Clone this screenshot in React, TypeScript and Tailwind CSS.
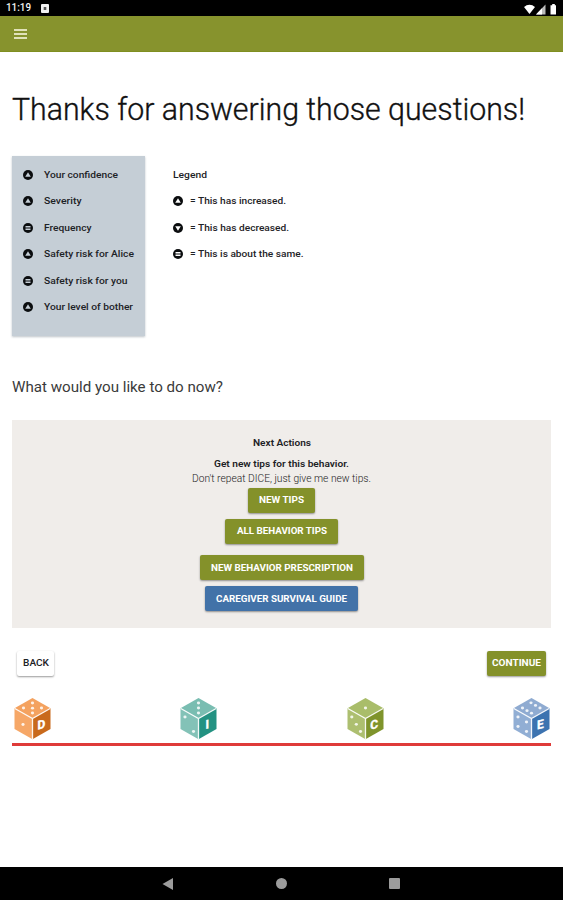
import type { ReactNode } from "react";
import { clsx } from "clsx";

type Trend = "up" | "down" | "same";

const results: { label: string; trend: Trend; width: number }[] = [
  { label: "Your confidence", trend: "up", width: 74 },
  { label: "Severity", trend: "up", width: 37.5 },
  { label: "Frequency", trend: "same", width: 47.5 },
  { label: "Safety risk for Alice", trend: "up", width: 90 },
  { label: "Safety risk for you", trend: "same", width: 83.5 },
  { label: "Your level of bother", trend: "up", width: 89 },
];

const legend: { label: string; trend: Trend; width: number }[] = [
  { label: "= This has increased.", trend: "up", width: 96 },
  { label: "= This has decreased.", trend: "down", width: 99 },
  { label: "= This is about the same.", trend: "same", width: 113.5 },
];

type DieProps = { letter: string; top: string; left: string; right: string; pips: number[][] };

const dice: DieProps[] = [
  {
    letter: "D", top: "#f4a25f", left: "#f6a767", right: "#c96a1c",
    pips: [[18.5, 5], [9.5, 10], [18.5, 10.2], [27.5, 10], [18.5, 15], [9, 26.5]],
  },
  {
    letter: "I", top: "#79bdb1", left: "#83c2b7", right: "#239282",
    pips: [[18.5, 5], [18.5, 10], [18.5, 15], [5, 19], [13.5, 33.5]],
  },
  {
    letter: "C", top: "#a9bd6a", left: "#adbf70", right: "#7f942c",
    pips: [[18.5, 10], [4.8, 19], [9.3, 26.3], [13.5, 33.5]],
  },
  {
    letter: "E", top: "#8fabd1", left: "#91aed4", right: "#3c73b0",
    pips: [[18, 4.8], [22.5, 7.4], [27, 10], [9.5, 10], [14, 12.7], [18.5, 15.2], [5, 19], [13.5, 24], [5, 28.5], [13.5, 33.5]],
  },
];

function Label({ children, width, size = 9.8, weight = 500, fill = "#1d2226" }: {
  children: string; width: number; size?: number; weight?: number; fill?: string;
}) {
  return (
    <svg width={width} height={16} className="block shrink-0 overflow-visible">
      <text x="0" y="11" textLength={width} lengthAdjust="spacingAndGlyphs" fontSize={size} fontWeight={weight} fill={fill}>
        {children}
      </text>
    </svg>
  );
}

function TrendIcon({ trend, hole }: { trend: Trend; hole: string }) {
  return (
    <svg width="10" height="10" viewBox="0 0 10 10" className="block shrink-0">
      <circle cx="5" cy="5" r="5" fill="#0b0d0f" />
      {trend === "up" && <path d="M5 2.2 7.8 6.8H2.2Z" fill={hole} />}
      {trend === "down" && <path d="M5 7.8 2.2 3.2h5.6Z" fill={hole} />}
      {trend === "same" && <path d="M2.5 3.1h5v1.4h-5zM2.5 5.5h5v1.4h-5z" fill={hole} />}
    </svg>
  );
}

function Button({ children, className }: { children: ReactNode; className?: string }) {
  return (
    <button
      className={clsx(
        "flex items-center justify-center rounded-[2px] text-white shadow-[0_1px_2px_rgba(0,0,0,0.4)]",
        className
      )}
    >
      {children}
    </button>
  );
}

function Die({ letter, top, left, right, pips }: DieProps) {
  return (
    <svg width="37" height="42" viewBox="0 0 37 42" className="block">
      <path d="M18.5 0 36.5 10.3 18.5 20.6 0.5 10.3Z" fill={top} />
      <path d="M0.5 10.3 18.5 20.6V41.2L0.5 31Z" fill={left} />
      <path d="M36.5 10.3 18.5 20.6V41.2L36.5 31Z" fill={right} />
      <path d="M0.8 10.5 18.5 20.6 36.2 10.5M18.5 20.6V41" fill="none" stroke="#fff" strokeOpacity="0.9" strokeWidth="1.3" />
      {pips.map(([x, y]) => (
        <ellipse key={`${x}-${y}`} cx={x} cy={y} rx="1.6" ry="1.4" fill="#fff" fillOpacity="0.85" />
      ))}
      <text
        transform="translate(27.3 26.3) skewY(-15)"
        y="4.3"
        textAnchor="middle"
        fontSize="12"
        fontWeight="700"
        fill="#fff"
        stroke="#fff"
        strokeWidth="0.4"
      >
        {letter}
      </text>
    </svg>
  );
}

function StatusBar() {
  return (
    <div className="flex h-4 items-center bg-black pl-[6px] pr-[5px]">
      <Label width={25} size={10.5} fill="#f4f4f4">11:19</Label>
      <svg width="8" height="9" viewBox="0 0 8 9" className="ml-[9.5px] mt-[1px]">
        <rect width="8" height="9" rx="1" fill="#f2f2f2" />
        <rect x="2.7" y="3" width="2.6" height="3" fill="#555" />
      </svg>
      <svg width="33" height="11" viewBox="0 0 33 11" className="ml-auto mr-px mt-[2px]">
        <path d="M0 3.1C3-.2 8-.2 11 3.1L5.5 10Z" fill="#fff" />
        <path d="M12 10.5 21.5.5v10Z" fill="#bbb" />
        <path d="M12 10.5 18 4.3v6.2Z" fill="#fff" />
        <path d="M27 1.3h1.2V0h2.6v1.3H32v9.2h-5.5V1.3Z" fill="#fff" />
      </svg>
    </div>
  );
}

export default function App() {
  return (
    <div className="flex h-[900px] w-[563px] flex-col overflow-hidden bg-white font-[Roboto,sans-serif] text-[#1d1d1d]">
      <StatusBar />
      <header className="flex h-9 shrink-0 items-center border-b border-[#7f8f20] bg-[#87932d] pl-[14px]">
        <svg width="13" height="10" viewBox="0 0 13 10" className="mt-px">
          <path d="M0 1h13M0 5h13M0 9h13" stroke="#fffde8" strokeWidth="1.6" />
        </svg>
      </header>

      <main className="flex-1 px-3">
        <h1 className="mt-[38px] h-10">
          <svg width="513" height="40" className="block overflow-visible">
            <text
              x="0"
              y="30"
              textLength="513"
              lengthAdjust="spacingAndGlyphs"
              fontSize="30.5"
              fontWeight="300"
              fill="#111"
              stroke="#111"
              strokeWidth="0.35"
            >
              Thanks for answering those questions!
            </text>
          </svg>
        </h1>

        <div className="mt-[26px] flex items-start">
          <ul className="flex h-[180px] w-[133px] flex-col gap-[10.4px] bg-[#c5ced6] pl-[11px] pt-[11px] shadow-[0_1px_2px_rgba(70,85,100,0.35)]">
            {results.map((row) => (
              <li key={row.label} className="flex h-4 items-center gap-[11px]">
                <TrendIcon trend={row.trend} hole="#c5ced6" />
                <Label width={row.width}>{row.label}</Label>
              </li>
            ))}
          </ul>
          <div className="ml-7 flex flex-col gap-[10.4px] pt-[11px]">
            <Label width={34}>Legend</Label>
            {legend.map((row) => (
              <div key={row.label} className="flex h-4 items-center gap-[6.5px]">
                <TrendIcon trend={row.trend} hole="#fff" />
                <Label width={row.width}>{row.label}</Label>
              </div>
            ))}
          </div>
        </div>

        <h2 className="mt-[42px] h-[18px]">
          <svg width="211" height="18" className="block overflow-visible">
            <text x="0" y="13.5" textLength="211" lengthAdjust="spacingAndGlyphs" fontSize="15" fill="#3a3a3a">
              What would you like to do now?
            </text>
          </svg>
        </h2>

        <section className="mt-6 flex h-[208px] flex-col items-center bg-[#f0edea] pt-[15px]">
          <Label width={58} weight={600}>Next Actions</Label>
          <div className="mt-[5px]">
            <Label width={135} weight={600}>Get new tips for this behavior.</Label>
          </div>
          <div className="-mt-px">
            <Label width={179} size={10.5} weight={300} fill="#222">Don't repeat DICE, just give me new tips.</Label>
          </div>
          <Button className="mt-[0.5px] h-[25px] w-[67px] bg-[#84912a]">
            <Label width={45} weight={700} fill="#fff">NEW TIPS</Label>
          </Button>
          <Button className="mt-[6px] h-[25px] w-[113px] bg-[#84912a]">
            <Label width={90} weight={700} fill="#fff">ALL BEHAVIOR TIPS</Label>
          </Button>
          <Button className="mt-[11.5px] h-[25px] w-[164px] bg-[#84912a]">
            <Label width={142} weight={700} fill="#fff">NEW BEHAVIOR PRESCRIPTION</Label>
          </Button>
          <Button className="mt-[6px] h-[25px] w-[153px] bg-[#4272a8]">
            <Label width={131} weight={700} fill="#fff">CAREGIVER SURVIVAL GUIDE</Label>
          </Button>
        </section>

        <div className="mt-[22.5px] flex justify-between px-[5px]">
          <Button className="h-[25px] w-[37px] bg-white">
            <Label width={26}>BACK</Label>
          </Button>
          <Button className="h-[25px] w-[59.5px] bg-[#84912a]">
            <Label width={49} weight={700} fill="#fff">CONTINUE</Label>
          </Button>
        </div>

        <div className="mt-[22.5px] flex justify-between border-b-[3px] border-[#df3b39] pb-[3px] pl-[1.5px] pr-[1px]">
          {dice.map((die) => (
            <Die key={die.letter} {...die} />
          ))}
        </div>
      </main>

      <nav className="flex h-[33px] shrink-0 items-center justify-center gap-[102px] bg-black pr-[2px]">
        <svg width="12" height="12" viewBox="0 0 12 12">
          <path d="M0.5 6 11 0v12Z" fill="#9c9c9c" />
        </svg>
        <span className="h-[11px] w-[11px] rounded-full bg-[#9c9c9c]" />
        <span className="h-[11px] w-[11px] rounded-[1px] bg-[#9c9c9c]" />
      </nav>
    </div>
  );
}
